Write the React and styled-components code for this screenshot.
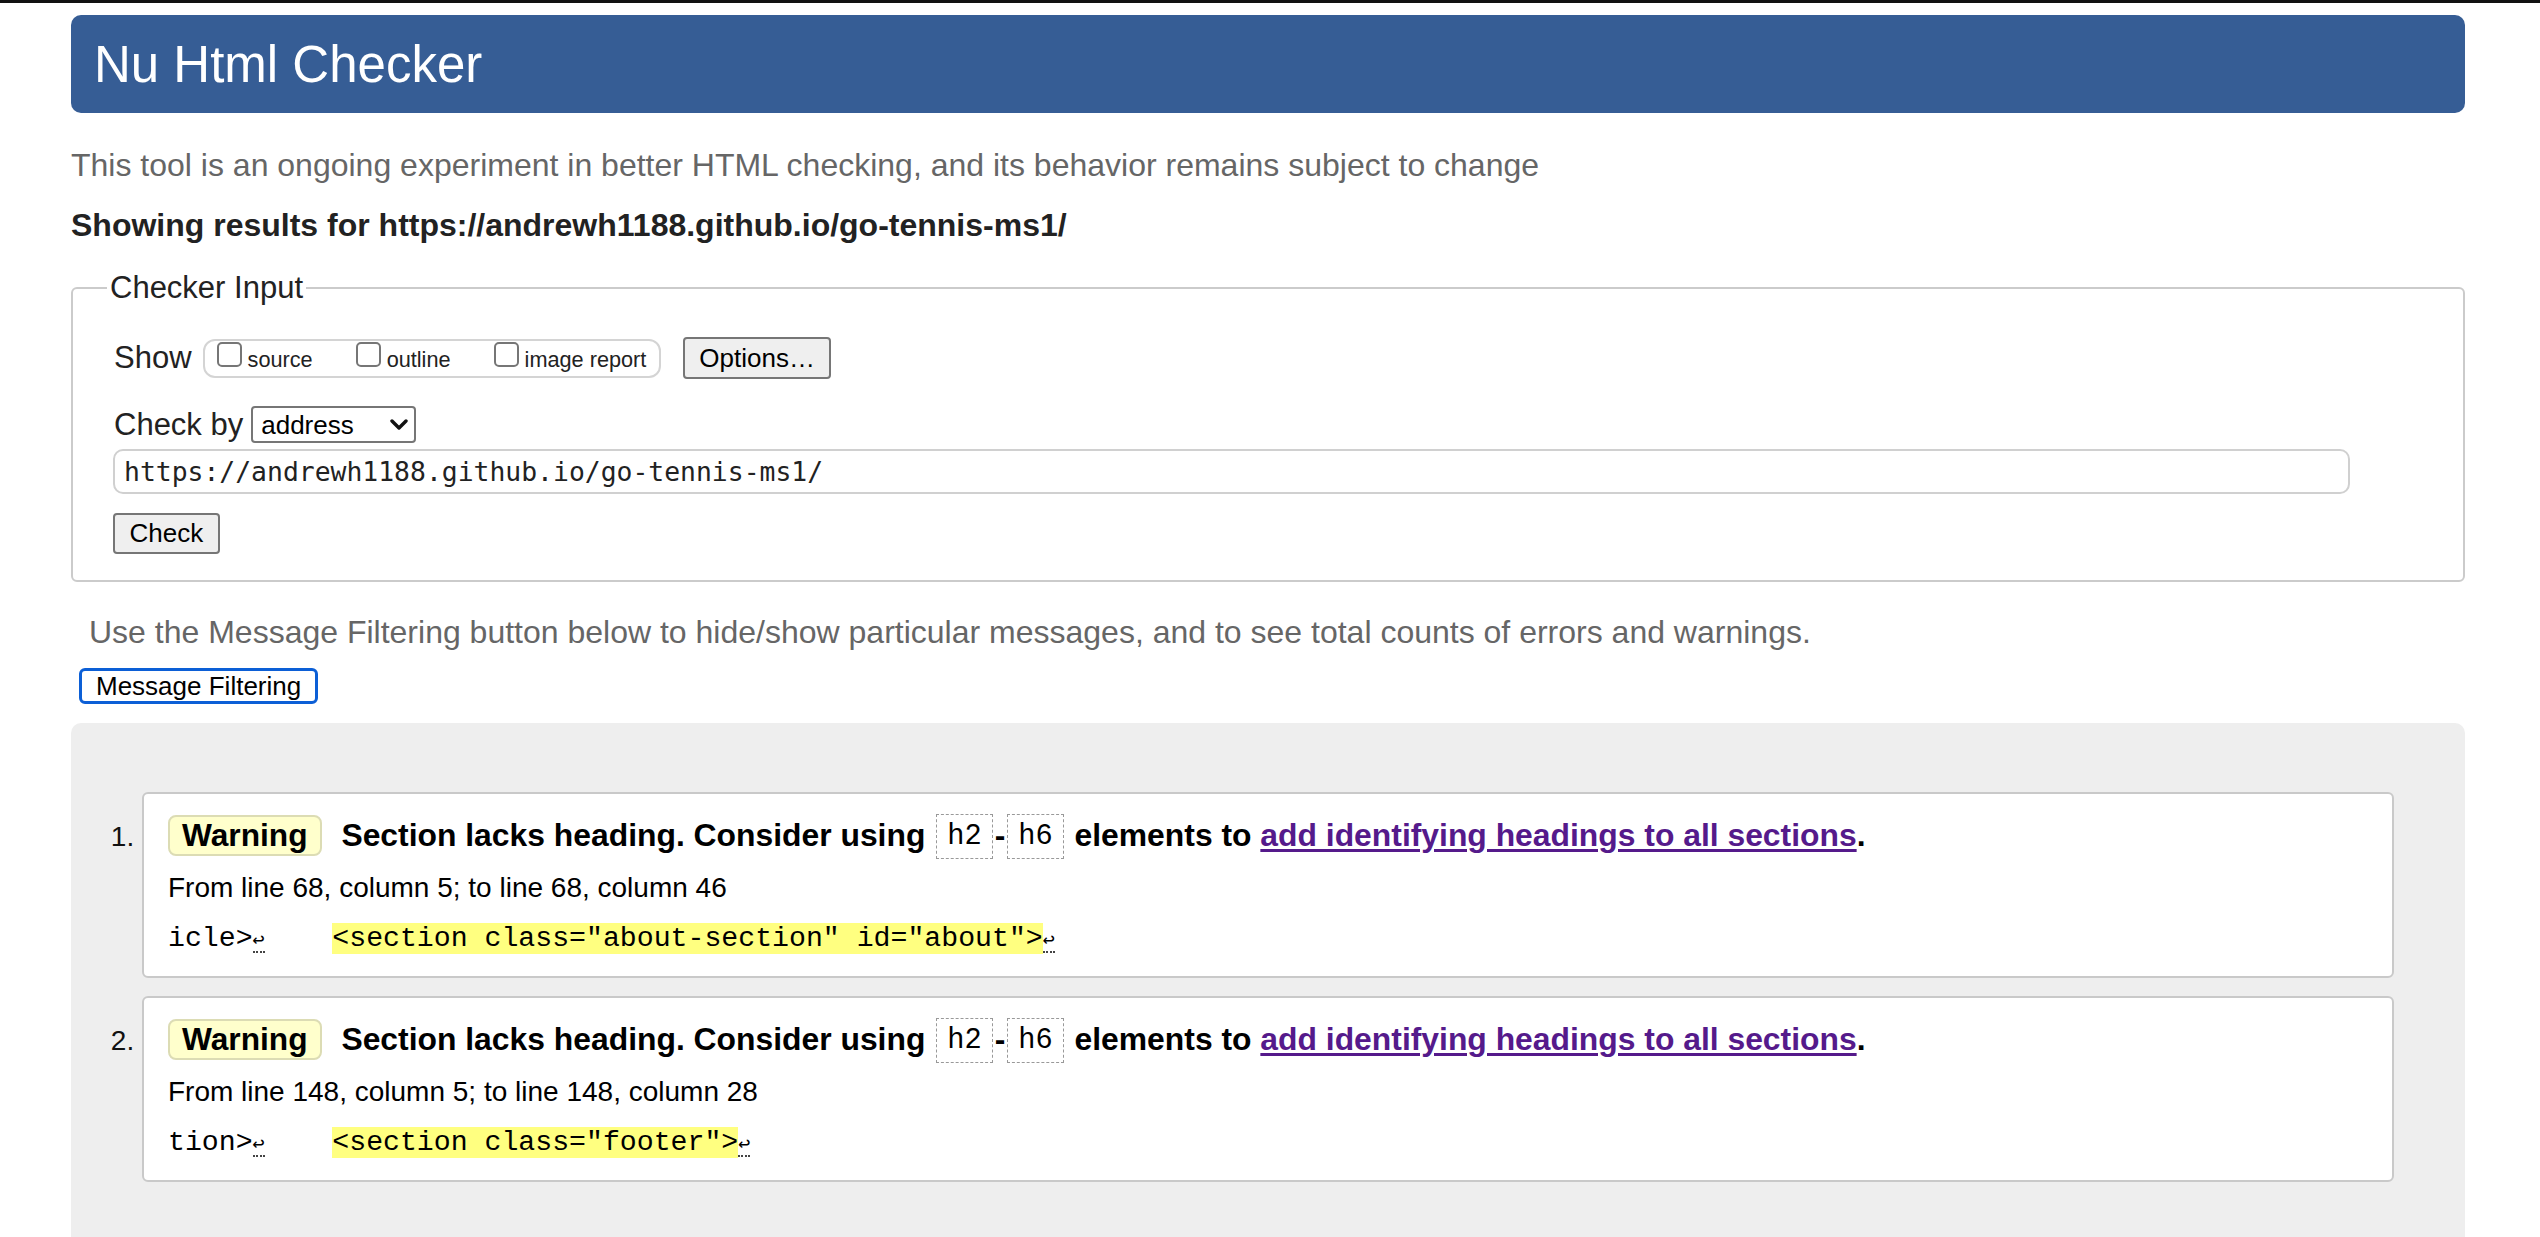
import React from "react";
import styled, { createGlobalStyle } from "styled-components";

const GlobalStyle = createGlobalStyle`
	html, body {
		margin: 0;
		padding: 0;
		background: #fff;
	}
	body {
		font-family: "Liberation Sans", Arial, sans-serif;
		color: #222;
	}
`;

const TopEdge = styled.div`
	height: 3px;
	background: #111;
`;

const Page = styled.main`
	width: 2394px;
	margin: 12px 0 0 71px;
`;

const Banner = styled.h1`
	margin: 0;
	height: 98px;
	display: flex;
	align-items: center;
	padding-left: 23px;
	background: #365d95;
	border-radius: 10px;
	color: #fff;
	font-size: 51px;
	font-weight: 400;
`;

const Intro = styled.p`
	margin: 34px 0 0;
	font-size: 32px;
	color: #666;
`;

const ResultsFor = styled.p`
	margin: 23px 0 0;
	font-size: 32px;
	font-weight: 700;
	color: #222;
`;

const Form = styled.fieldset`
	margin: 26px 0 0;
	padding: 31px 41px 26px;
	border: 2px solid #cbcbcb;
	border-radius: 6px;
`;

const Legend = styled.legend`
	margin-left: -7px;
	padding: 0 3px;
	font-size: 31px;
	color: #222;
`;

const Row = styled.div`
	display: flex;
	align-items: center;
	margin-top: ${(p) => p.$gap || 0}px;
`;

const Label = styled.span`
	font-size: 31px;
	color: #222;
	margin-right: ${(p) => p.$space}px;
`;

const ShowGroup = styled.div`
	display: flex;
	align-items: flex-start;
	gap: 43px;
	box-sizing: border-box;
	height: 39px;
	padding: 1px 13px 0 12px;
	border: 2px solid #d4d4d4;
	border-radius: 12px;
`;

const Option = styled.label`
	display: flex;
	align-items: flex-start;
	gap: 6px;
	font-size: 21.7px;
	line-height: 25px;
	color: #222;

	& span {
		margin-top: 5px;
	}
`;

const Tick = styled.input.attrs({ type: "checkbox" })`
	appearance: none;
	margin: 0;
	width: 25px;
	height: 25px;
	box-sizing: border-box;
	border: 2px solid #767676;
	border-radius: 5px;
	background: #fff;
`;

const Button = styled.button`
	display: block;
	font-family: "Liberation Sans", Arial, sans-serif;
	font-size: 26px;
	color: #000;
	background: #efefef;
	border: 2px solid #767676;
	border-radius: 4px;
	padding: ${(p) => p.$pad || "3px 14px"};
	margin: ${(p) => p.$margin || "0"};
`;

const SelectWrap = styled.div`
	position: relative;
	width: 165px;
	height: 37px;
`;

const Select = styled.select`
	appearance: none;
	width: 100%;
	height: 100%;
	box-sizing: border-box;
	border: 2px solid #767676;
	border-radius: 4px;
	padding: 0 8px;
	font: 26px "Liberation Sans", Arial, sans-serif;
	color: #000;
	background: #fff;
`;

const Chevron = styled.svg`
	position: absolute;
	right: 8px;
	top: 13px;
	pointer-events: none;
`;

const UrlField = styled.input`
	display: block;
	box-sizing: border-box;
	width: calc(100% - 71px);
	height: 45px;
	margin: 6px 0 0 -1px;
	padding: 0 9px;
	border: 2px solid #d0d0d0;
	border-radius: 10px;
	font: 26.4px "DejaVu Sans Mono", monospace;
	color: #222;
	outline: none;
`;

const Hint = styled.p`
	margin: 32px 0 0;
	padding-left: 18px;
	font-size: 32px;
	color: #666;
`;

const FilterButton = styled.button`
	display: block;
	height: 36px;
	margin: 17px 0 0 8px;
	padding: 0 14px;
	background: #fff;
	border: 3px solid #0c5fd6;
	border-radius: 6px;
	font-family: "Liberation Sans", Arial, sans-serif;
	font-size: 26px;
	color: #000;
`;

const Results = styled.ol`
	margin: 19px 0 0;
	padding: 69px 71px 70px;
	background: #eee;
	border-radius: 10px;
	list-style: decimal outside;
`;

const Message = styled.li`
	background: #fff;
	border: 2px solid #c9c9c9;
	border-radius: 6px;
	padding: 20px 24px 22px;
	margin-bottom: 18px;
	font-size: 28px;
	color: #000;

	&::marker {
		color: #111;
	}
`;

const Summary = styled.p`
	margin: 0;
	font-size: 31.85px;
	font-weight: 700;
`;

const Badge = styled.strong`
	display: inline-block;
	padding: 0 12px;
	margin-right: 11px;
	background: #ffffcc;
	border: 2px solid #dcdcb4;
	border-radius: 8px;
	font-size: 31.7px;
`;

const Code = styled.code`
	display: inline-block;
	vertical-align: 2px;
	margin: 0 2px;
	padding: 5px 10px;
	border: 1.5px dashed #999;
	font-family: "Liberation Mono", monospace;
	font-size: 28.7px;
	font-weight: 400;
`;

const DocLink = styled.a`
	color: #551a8b;
	text-decoration: underline;
	text-underline-offset: 3px;
`;

const Location = styled.p`
	margin: 13px 0 0;
`;

const Extract = styled.p`
	margin: 19px 0 0;
	font-family: "Liberation Mono", monospace;
	font-size: 28.2px;
	white-space: pre;
`;

const Mark = styled.b`
	font-weight: 400;
	background: #ffff80;
`;

const LineBreak = styled.span`
	font-family: "DejaVu Sans Mono", monospace;
	font-size: 20px;
	border-bottom: 2px dotted #444;
`;

const messages = [
	{
		from: "From line 68, column 5; to line 68, column 46",
		before: "icle>",
		mark: '<section class="about-section" id="about">',
	},
	{
		from: "From line 148, column 5; to line 148, column 28",
		before: "tion>",
		mark: '<section class="footer">',
	},
];

function App() {
	return (
		<>
			<GlobalStyle />
			<TopEdge />
			<Page>
				<Banner>Nu Html Checker</Banner>
				<Intro>
					This tool is an ongoing experiment in better HTML checking, and its behavior remains subject to change
				</Intro>
				<ResultsFor>Showing results for https://andrewh1188.github.io/go-tennis-ms1/</ResultsFor>

				<Form>
					<Legend>Checker Input</Legend>
					<Row>
						<Label $space={11}>Show</Label>
						<ShowGroup>
							{["source", "outline", "image report"].map((name) => (
								<Option key={name}>
									<Tick />
									<span>{name}</span>
								</Option>
							))}
						</ShowGroup>
						<Button $pad="3.5px 14px" $margin="0 0 0 22px">
							Options…
						</Button>
					</Row>
					<Row $gap={27}>
						<Label $space={8}>Check by</Label>
						<SelectWrap>
							<Select defaultValue="address">
								<option value="address">address</option>
								<option value="file">file upload</option>
								<option value="text">text input</option>
							</Select>
							<Chevron width="18" height="11" viewBox="0 0 18 11">
								<path d="M2 2l7 7 7-7" fill="none" stroke="#111" strokeWidth="3.4" strokeLinecap="round" strokeLinejoin="round" />
							</Chevron>
						</SelectWrap>
					</Row>
					<UrlField defaultValue="https://andrewh1188.github.io/go-tennis-ms1/" />
					<Button $pad="3px 14.5px" $margin="19px 0 0 -1px">
						Check
					</Button>
				</Form>

				<Hint>
					Use the Message Filtering button below to hide/show particular messages, and to see total counts of errors and warnings.
				</Hint>
				<FilterButton>Message Filtering</FilterButton>

				<Results>
					{messages.map((m) => (
						<Message key={m.from}>
							<Summary>
								<Badge>Warning</Badge> Section lacks heading. Consider using <Code>h2</Code>-<Code>h6</Code> elements to{" "}
								<DocLink href="#">add identifying headings to all sections</DocLink>.
							</Summary>
							<Location>{m.from}</Location>
							<Extract>
								{m.before}
								<LineBreak>↩</LineBreak>
								{"    "}
								<Mark>{m.mark}</Mark>
								<LineBreak>↩</LineBreak>
							</Extract>
						</Message>
					))}
				</Results>
			</Page>
		</>
	);
}

export default App;
